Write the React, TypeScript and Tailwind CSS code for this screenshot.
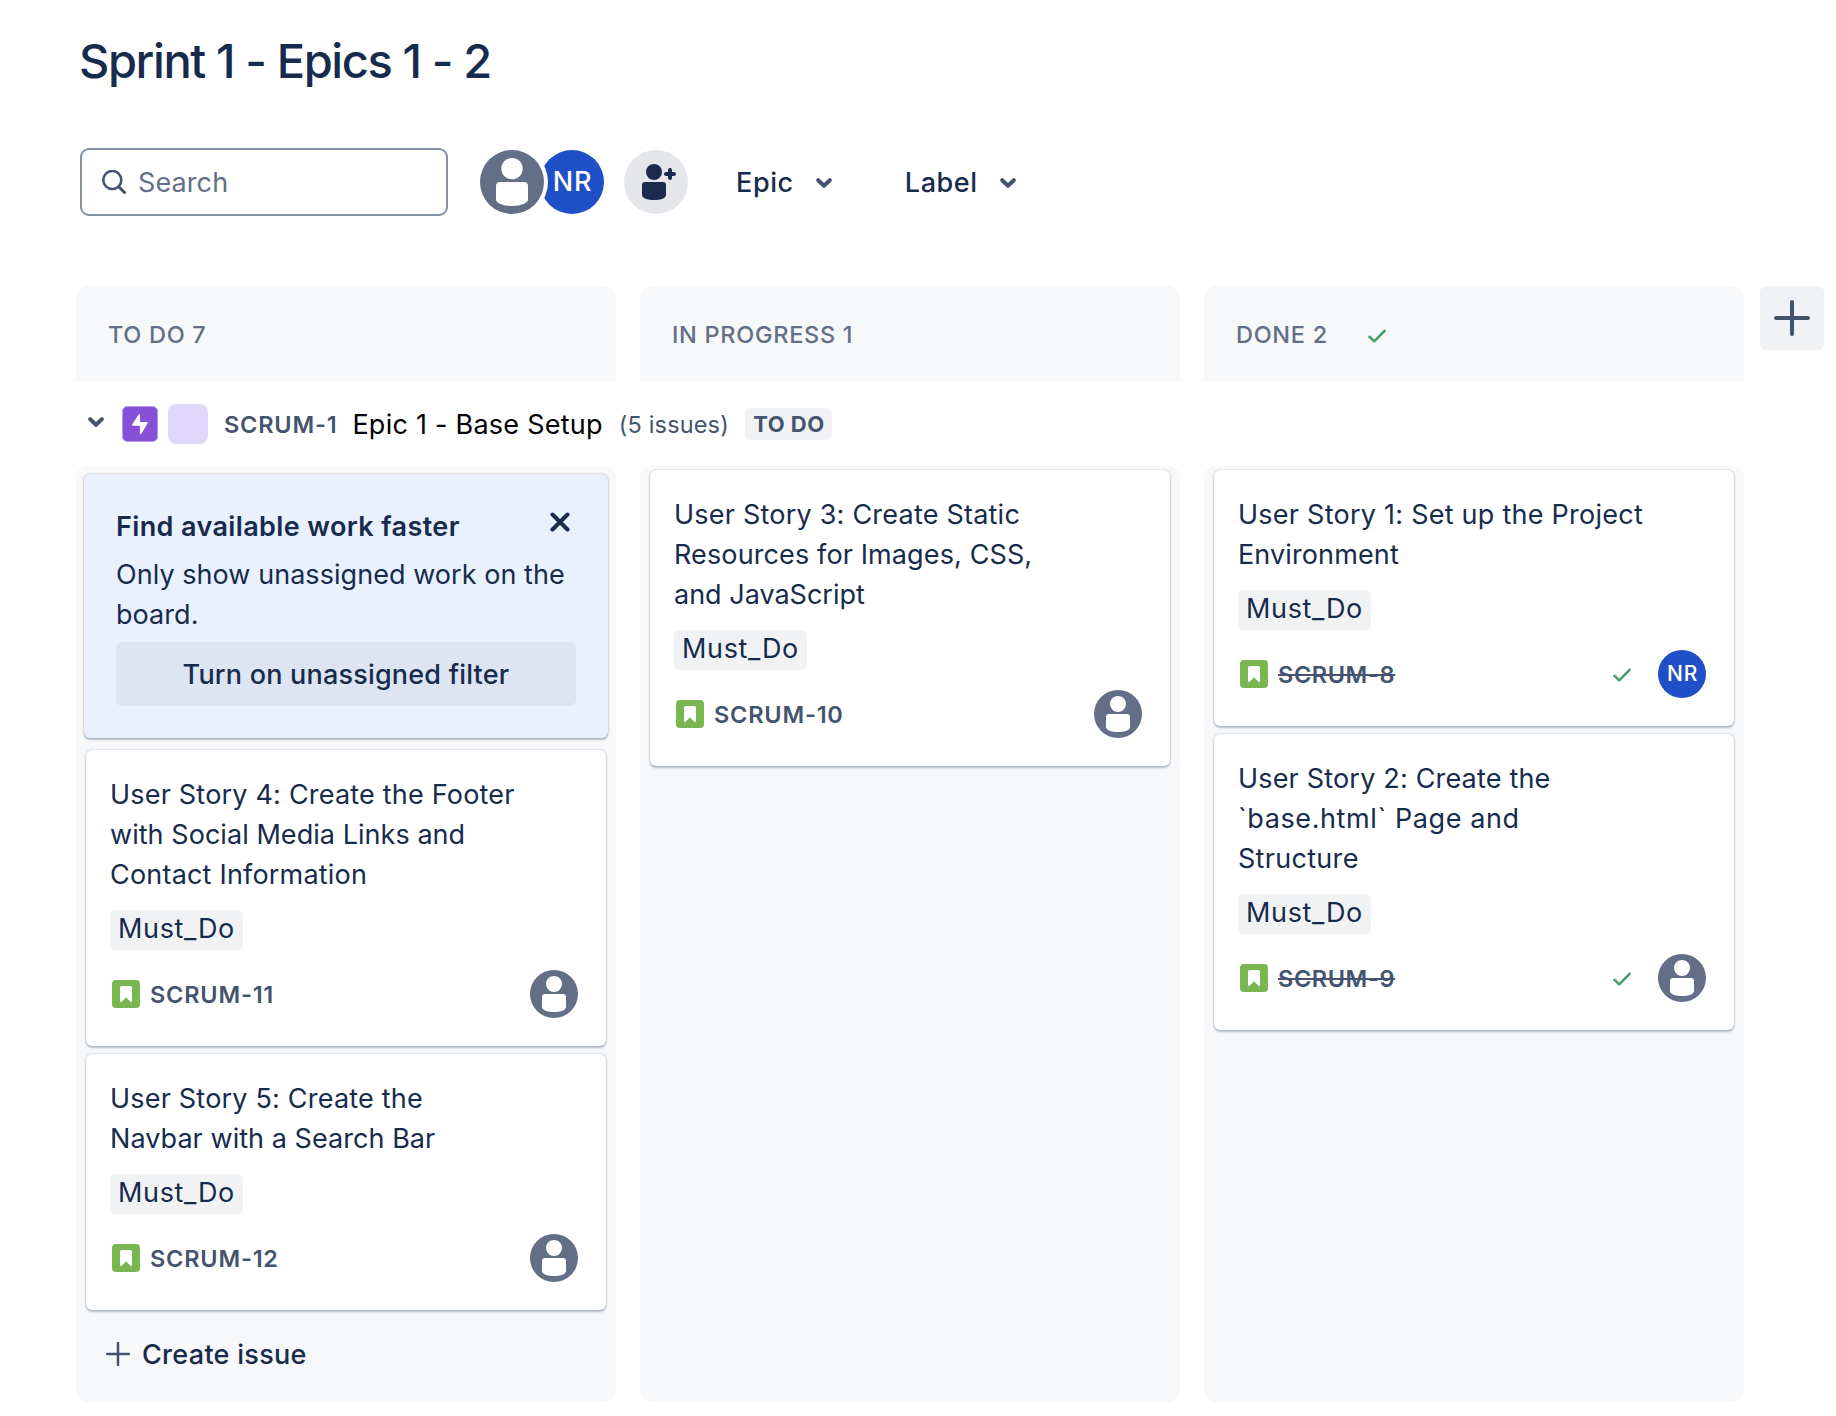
import type { ReactNode } from "react";

type Line = { text: string; tracking?: string };
type Story = { id: string; lines: Line[]; done?: boolean; assignee?: string };

const stories: Record<string, Story[]> = {
  todo: [
    {
      id: "SCRUM-11",
      lines: [
        { text: "User Story 4: Create the Footer", tracking: "tracking-[0.2px]" },
        { text: "with Social Media Links and", tracking: "tracking-[0.05px]" },
        { text: "Contact Information", tracking: "tracking-[0.2px]" },
      ],
    },
    {
      id: "SCRUM-12",
      lines: [
        { text: "User Story 5: Create the", tracking: "tracking-[0.2px]" },
        { text: "Navbar with a Search Bar", tracking: "tracking-[0.05px]" },
      ],
    },
  ],
  progress: [
    {
      id: "SCRUM-10",
      lines: [
        { text: "User Story 3: Create Static", tracking: "tracking-[0.22px]" },
        { text: "Resources for Images, CSS," },
        { text: "and JavaScript", tracking: "tracking-[0px]" },
      ],
    },
  ],
  done: [
    {
      id: "SCRUM-8",
      done: true,
      assignee: "NR",
      lines: [
        { text: "User Story 1: Set up the Project", tracking: "tracking-[0.25px]" },
        { text: "Environment" },
      ],
    },
    {
      id: "SCRUM-9",
      done: true,
      lines: [
        { text: "User Story 2: Create the", tracking: "tracking-[0.18px]" },
        { text: "`base.html` Page and", tracking: "tracking-[0.6px]" },
        { text: "Structure", tracking: "tracking-[0.3px]" },
      ],
    },
  ],
};

function PersonAvatar({ className }: { className: string }) {
  return (
    <svg viewBox="0 0 48 48" className={className}>
      <circle cx="24" cy="24" r="24" fill="#626f86" />
      <circle cx="24" cy="14" r="8" fill="#fff" />
      <path d="M12 27a3 3 0 0 1 3-3h18a3 3 0 0 1 3 3v10c0 3-5 5-12 5s-12-2-12-5z" fill="#fff" />
    </svg>
  );
}

function Chevron() {
  return (
    <svg viewBox="0 0 16 10" className="h-2.5 w-4 shrink-0">
      <path d="M2.2 2.2 8 7.8l5.8-5.6" fill="none" stroke="#44546f" strokeWidth="4" strokeLinecap="round" strokeLinejoin="round" />
    </svg>
  );
}

function Check({ className = "" }: { className?: string }) {
  return (
    <svg viewBox="0 0 18 14" className={`h-3.5 w-[18px] shrink-0 ${className}`}>
      <path d="M1.5 7.8 6.2 12.4 16.6 1.8" fill="none" stroke="#4a9f6c" strokeWidth="2.6" strokeLinecap="round" strokeLinejoin="round" />
    </svg>
  );
}

function StoryIcon() {
  return (
    <svg viewBox="0 0 28 28" className="size-7 shrink-0">
      <rect width="28" height="28" rx="4" fill="#7ab650" />
      <path d="M8 8a2 2 0 0 1 2-2h8a2 2 0 0 1 2 2v13.2c0 .8-.9 1.1-1.5.5L14 17.2l-4.500 4.500c-.6.6-1.500.3-1.500-.5z" fill="#fff" />
    </svg>
  );
}

function StoryCard({ story }: { story: Story }) {
  return (
    <article className="rounded-md bg-white px-6 pt-[25px] pb-7 shadow-[0_2px_2px_rgba(9,30,66,0.25),0_0_2px_rgba(9,30,66,0.31)]">
      <h3 className="text-[27px] leading-10">
        {story.lines.map((line) => (
          <span key={line.text} className={`block whitespace-nowrap ${line.tracking ?? "tracking-[0.12px]"}`}>
            {line.text}
          </span>
        ))}
      </h3>
      <div className="mt-[15px] h-10 w-[133px] rounded-md bg-[#f1f2f4] px-2 pt-px text-[27px] leading-9 tracking-[0.65px]">
        Must_Do
      </div>
      <div className="mt-5 flex h-12 items-center pr-1 pl-0.5">
        <StoryIcon />
        <span
          className={`mt-0.5 ml-2.5 text-[23.5px] font-semibold text-[#44546f] ${
            story.done ? "tracking-[0.6px] line-through decoration-2" : "tracking-[0.8px]"
          }`}
        >
          {story.id}
        </span>
        <div className="ml-auto flex items-center">
          {story.done && <Check className="mt-0.5 mr-[27px]" />}
          {story.assignee ? (
            <span className="flex size-12 items-center justify-center rounded-full bg-[#2050c8] pl-px text-[21px] font-medium tracking-[0.8px] text-white">
              {story.assignee}
            </span>
          ) : (
            <PersonAvatar className="size-12" />
          )}
        </div>
      </div>
    </article>
  );
}

function ColumnHeader({ children }: { children: ReactNode }) {
  return (
    <div className="flex h-24 w-[540px] items-center rounded-t-xl bg-[#f7f8f9] pt-0.5 pl-8 text-[23.5px] font-medium tracking-[0.7px] text-[#626f86]">
      {children}
    </div>
  );
}

function Column({ children }: { children: ReactNode }) {
  return <div className="flex h-[936px] w-[540px] flex-col gap-2 rounded-xl bg-[#f7f8f9] px-2.5 pt-1">{children}</div>;
}

export default function App() {
  return (
    <main className="h-[1416px] w-[1836px] overflow-hidden bg-white pt-[33px] pl-[76px] font-['Inter',sans-serif] text-[#172b4d]">
      <h1 className="pl-[3px] text-[47px] leading-[56px] font-medium tracking-[-1.4px]">Sprint 1 - Epics 1 - 2</h1>

      <div className="mt-[59px] ml-1 flex h-[68px] items-center">
        <div className="flex h-[68px] w-[368px] items-center rounded-[9px] border-2 border-[#8590a2] pl-5">
          <svg viewBox="0 0 24 24" className="size-6">
            <circle cx="10.3" cy="10" r="9" fill="none" stroke="#44546f" strokeWidth="2.6" />
            <path d="m17 17 5.5 5.5" stroke="#44546f" strokeWidth="3" strokeLinecap="round" />
          </svg>
          <span className="mt-[3px] ml-3 text-[27px] tracking-[0.1px] text-[#626f86]">Search</span>
        </div>
        <div className="ml-8 flex items-center">
          <div className="z-10 -m-1 rounded-full bg-white p-1">
            <PersonAvatar className="size-16" />
          </div>
          <div className="-ml-1 flex size-16 items-center justify-center rounded-full bg-[#2050c8] pl-px text-[27px] font-medium tracking-[0.8px] text-white">
            NR
          </div>
          <div className="ml-5 flex size-16 items-center justify-center rounded-full bg-[#e4e6ea]">
            <svg viewBox="0 0 64 64" className="size-16">
              <g fill="#1c2b4d">
                <circle cx="30" cy="22" r="8" />
                <path d="M18 35a3 3 0 0 1 3-3h18a3 3 0 0 1 3 3v10c0 3-5 5-12 5s-12-2-12-5z" />
              </g>
              <path d="M46 20v8M42 24h8" stroke="#1c2b4d" strokeWidth="4" strokeLinecap="round" />
            </svg>
          </div>
        </div>
        <button className="mt-0.5 ml-12 flex items-center text-[27px] font-medium tracking-[0.6px]">
          Epic
          <span className="ml-[22px]">
            <Chevron />
          </span>
        </button>
        <button className="mt-0.5 ml-[73px] flex items-center text-[27px] font-medium tracking-[0.6px]">
          Label
          <span className="ml-[22px]">
            <Chevron />
          </span>
        </button>
      </div>

      <div className="mt-[70px] flex items-start">
        <div className="flex gap-6">
          <ColumnHeader>TO DO 7</ColumnHeader>
          <ColumnHeader>IN PROGRESS 1</ColumnHeader>
          <ColumnHeader>
            DONE 2 <Check className="mt-0.5 ml-10" />
          </ColumnHeader>
        </div>
        <button className="ml-4 flex size-16 items-center justify-center rounded-md bg-[#f1f2f4]">
          <svg viewBox="0 0 36 36" className="size-9">
            <path d="M18 2v32M2 18h32" stroke="#44546f" strokeWidth="4" strokeLinecap="round" />
          </svg>
        </button>
      </div>

      <div className="flex h-[84px] items-center pl-3">
        <div className="-mt-1">
          <Chevron />
        </div>
        <svg viewBox="0 0 36 36" className="ml-[18px] size-9">
          <rect x="0.5" y="0.5" width="35" height="35" rx="5" fill="#8650d8" stroke="#b795e8" />
          <path d="M16.700 8.400c.4-.7 1.300-.5 1.300.4v7.200h6.700c.8 0 1.200.6.900 1.200l-6.200 10.600c-.5.8-1.500.6-1.500-.4v-7.600h-7c-.8 0-1.100-.6-.8-1.200z" fill="#fff" />
        </svg>
        <div className="ml-2.5 size-10 rounded-lg bg-[#dfd8fa]" />
        <span className="mt-0.5 ml-4 text-[23.5px] font-semibold tracking-[0.8px] text-[#44546f]">SCRUM-1</span>
        <span className="mt-0.5 ml-[15px] text-[27px] tracking-[0.25px] text-black">Epic 1 - Base Setup</span>
        <span className="mt-0.5 ml-4 text-[23.5px] tracking-[0.15px] text-[#44546f]">(5 issues)</span>
        <span className="ml-4 flex h-8 w-[87px] items-center justify-center rounded-md bg-[#f1f2f4] pl-px text-[22px] font-bold tracking-[0.5px] text-[#44546f]">
          TO DO
        </span>
      </div>

      <div className="flex gap-6">
        <Column>
          <section className="-mx-0.5 mt-1 mb-1 h-[264px] rounded-md bg-[#eaf1fe] px-8 pt-[33px] shadow-[0_2px_2px_rgba(9,30,66,0.25),0_0_2px_rgba(9,30,66,0.31)]">
            <div className="flex justify-between text-[27px] leading-10 font-semibold tracking-[0.38px]">
              <h2>Find available work faster</h2>
              <svg viewBox="0 0 20 20" className="mt-[5px] mr-1.5 size-5">
                <path d="m2.500 2.500 15 15M17.500 2.500l-15 15" stroke="#172b4d" strokeWidth="4" strokeLinecap="round" />
              </svg>
            </div>
            <p className="mt-2 text-[27px] leading-10 tracking-[0.05px]">
              Only show unassigned work on the
              <br />
              board.
            </p>
            <button className="mt-[7px] h-16 w-full rounded-md bg-[#dde4f2] pt-0.5 text-[27px] font-medium tracking-[0.2px]">
              Turn on unassigned filter
            </button>
          </section>
          {stories.todo.map((s) => (
            <StoryCard key={s.id} story={s} />
          ))}
          <button className="-mt-2 flex h-[88px] items-center pl-5 text-[27px] font-medium tracking-[0.3px]">
            <svg viewBox="0 0 24 24" className="mr-3 size-6">
              <path d="M12 1v22M1 12h22" stroke="#44546f" strokeWidth="2.5" strokeLinecap="round" />
            </svg>
            <span className="mt-0.5">Create issue</span>
          </button>
        </Column>
        <Column>
          {stories.progress.map((s) => (
            <StoryCard key={s.id} story={s} />
          ))}
        </Column>
        <Column>
          {stories.done.map((s) => (
            <StoryCard key={s.id} story={s} />
          ))}
        </Column>
      </div>
    </main>
  );
}
